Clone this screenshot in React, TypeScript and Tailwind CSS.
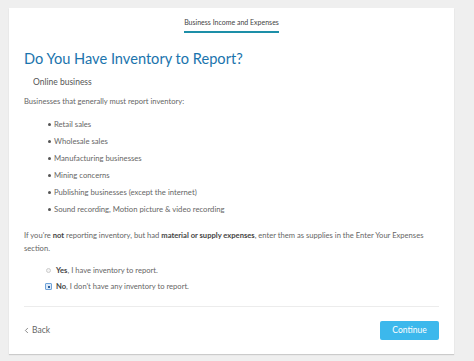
import { ChevronLeft } from "lucide-react";

const items = [
  "Retail sales",
  "Wholesale sales",
  "Manufacturing businesses",
  "Mining concerns",
  "Publishing businesses (except the internet)",
  "Sound recording, Motion picture & video recording",
];

export default function App() {
  return (
    <div
      className="h-[361px] w-[474px] overflow-hidden bg-[#efefef] pl-[9px] pt-[8px]"
      style={{ fontFamily: "Lato, 'Noto Sans', sans-serif" }}
    >
      <div className="h-[346px] w-[445px] bg-white shadow-[0_1px_1px_rgba(0,0,0,0.15)]">
        <div className="flex justify-center pt-[10px]">
          <div className="border-b-2 border-[#1d8fa8] pb-[4px] text-[7px] leading-[9px] text-[#444]">
            Business Income and Expenses
          </div>
        </div>

        <div className="px-[15px]">
          <h1 className="mt-[16px] text-[14.6px] leading-[20px] text-[#1a74ad]">
            Do You Have Inventory to Report?
          </h1>
          <div className="mt-[8px] pl-[9px] text-[8.5px] leading-[11px] text-[#555]">
            Online business
          </div>
          <div className="mt-[8px] text-[7.6px] leading-[10px] text-[#666]">
            Businesses that generally must report inventory:
          </div>

          <ul className="mt-[13px] flex flex-col gap-[7px] pl-[24px]">
            {items.map((t) => (
              <li key={t} className="flex items-center gap-[3px] text-[7.7px] leading-[10px] text-[#666]">
                <span className="h-[3px] w-[3px] rounded-full bg-[#555]" />
                {t}
              </li>
            ))}
          </ul>

          <p className="mt-[15px] text-[7.6px] leading-[13px] text-[#666]">
            If you're <b className="text-[#444]">not</b> reporting inventory, but had{" "}
            <b className="text-[#444]">material or supply expenses</b>, enter them as supplies in the
            Enter Your Expenses section.
          </p>

          <div className="mt-[11px] flex flex-col gap-[7px] pl-[21px]">
            <div className="flex items-center gap-[5px] text-[7.6px] leading-[9px] text-[#666]">
              <span className="ml-[1px] h-[5px] w-[5px] rounded-full border border-[#ccc] bg-[#f4f4f4]" />
              <span>
                <b className="text-[#444]">Yes</b>, I have inventory to report.
              </span>
            </div>
            <div className="flex items-center gap-[4px] text-[7.6px] leading-[9px] text-[#666]">
              <span className="flex h-[7px] w-[7px] items-center justify-center rounded-[1px] border border-[#6fa3d9] bg-[#dbe9f8]">
                <span className="h-[2px] w-[2px] bg-[#2a5f9e]" />
              </span>
              <span>
                <b className="text-[#444]">No</b>, I don't have any inventory to report.
              </span>
            </div>
          </div>

          <div className="mt-[15px] border-t border-[#ececec]" />

          <div className="mt-[14px] flex items-center justify-between">
            <div className="flex items-center text-[8.5px] text-[#666]">
              <ChevronLeft className="-ml-[2px] h-[9px] w-[9px]" strokeWidth={2} />
              <span className="ml-[1px]">Back</span>
            </div>
            <button className="h-[19px] w-[59px] rounded-[2px] bg-[#3cb8ec] text-[8.5px] text-white">
              Continue
            </button>
          </div>
        </div>
      </div>
    </div>
  );
}
